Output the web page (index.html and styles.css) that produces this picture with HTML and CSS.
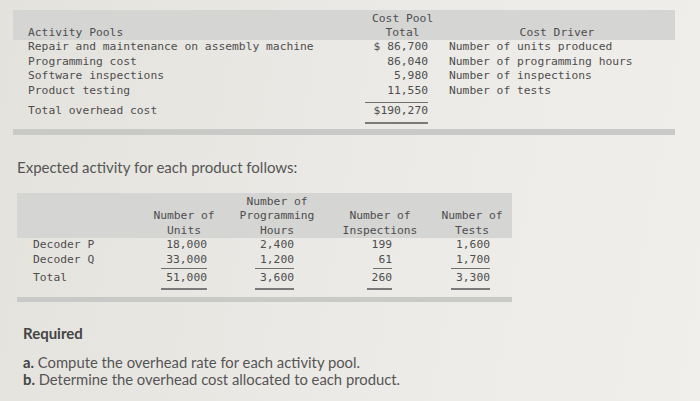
FILE: index.html
```html
<!DOCTYPE html>
<html lang="en">
<head>
    <meta charset="UTF-8">
    <title>Activity pools</title>
    <link rel="stylesheet" href="styles.css">
</head>
<body>
    <div class="hoja">

        <!-- tabla de pools de actividad -->
        <div class="pools">
            <div class="fila cabecera">
                <div>Activity Pools</div>
                <div class="centro costo">Cost Pool<br>Total</div>
                <div></div>
                <div class="centro">Cost Driver</div>
            </div>
            <div class="fila">
                <div>Repair and maintenance on assembly machine</div>
                <div class="num">$ 86,700</div>
                <div></div>
                <div>Number of units produced</div>
            </div>
            <div class="fila">
                <div>Programming cost</div>
                <div class="num">86,040</div>
                <div></div>
                <div>Number of programming hours</div>
            </div>
            <div class="fila">
                <div>Software inspections</div>
                <div class="num">5,980</div>
                <div></div>
                <div>Number of inspections</div>
            </div>
            <div class="fila">
                <div>Product testing</div>
                <div class="num linea">11,550</div>
                <div></div>
                <div>Number of tests</div>
            </div>
            <div class="fila total">
                <div>Total overhead cost</div>
                <div class="num doble">$190,270</div>
                <div></div>
                <div></div>
            </div>
        </div>

        <p class="texto">Expected activity for each product follows:</p>

        <!-- tabla de actividad por producto -->
        <div class="actividad">
            <div class="fila cabecera">
                <div></div>
                <div>Number of<br>Units</div>
                <div>Number of<br>Programming<br>Hours</div>
                <div>Number of<br>Inspections</div>
                <div>Number of<br>Tests</div>
            </div>
            <div class="fila">
                <div>Decoder P</div>
                <div class="c1"><span>18,000</span></div>
                <div class="c2"><span>2,400</span></div>
                <div class="c3"><span>199</span></div>
                <div class="c4"><span>1,600</span></div>
            </div>
            <div class="fila sub">
                <div>Decoder Q</div>
                <div class="c1"><span>33,000</span></div>
                <div class="c2"><span>1,200</span></div>
                <div class="c3"><span>61</span></div>
                <div class="c4"><span>1,700</span></div>
            </div>
            <div class="fila total">
                <div>Total</div>
                <div class="c1"><span>51,000</span></div>
                <div class="c2"><span>3,600</span></div>
                <div class="c3"><span>260</span></div>
                <div class="c4"><span>3,300</span></div>
            </div>
        </div>

        <p class="requerido">Required</p>
        <p class="paso"><b>a.</b> Compute the overhead rate for each activity pool.</p>
        <p class="paso"><b>b.</b> Determine the overhead cost allocated to each product.</p>
    </div>
</body>
</html>
```
FILE: styles.css
```css
body {
    margin: 0;
    background: linear-gradient(100deg, #e4e2dd 0%, #ebe9e5 45%, #f0efeb 100%);
    color: #505050;
    width: 700px;
    height: 401px;
    overflow: hidden;
}

.hoja {
    padding-top: 10px;
}

/* tablas en fuente monoespaciada */
.pools, .actividad {
    font-family: "DejaVu Sans Mono", monospace;
    font-size: 11.3px;
    line-height: 14.7px;
    color: #4e4e4e;
}

.pools {
    margin-left: 13px;
    width: 662px;
    padding-bottom: 5px;
    border-bottom: 6px solid #c9c9c7;
}

.pools .fila {
    display: grid;
    grid-template-columns: 337px 63px 21px 216px;
    padding-left: 15px;
}

.pools .cabecera {
    background: #d5d5d4;
    line-height: 14px;
    padding-top: 2px;
    align-items: end;
}

.pools .centro {
    text-align: center;
    white-space: nowrap;
}

.pools .costo {
    margin: 0 -5px 0 7px;
}

.pools .num {
    text-align: right;
}

.pools .linea {
    padding-bottom: 3px;
    border-bottom: 1px solid #707070;
}

.pools .total {
    margin-top: 1px;
}

.pools .doble {
    padding-bottom: 3px;
    border-bottom: 2px solid #7a7a7a;
}

.texto {
    margin: 23px 0 0 17px;
    font-family: Lato, sans-serif;
    font-size: 15px;
    line-height: 19px;
    color: #555;
}

.actividad {
    margin: 16px 0 0 17px;
    width: 495px;
    line-height: 14.5px;
    padding-bottom: 7px;
    border-bottom: 5px solid #c9c9c7;
}

.actividad .fila {
    display: grid;
    grid-template-columns: 107px 88px 98px 108px 76px;
    padding-left: 16px;
}

.actividad .cabecera {
    background: #d5d5d4;
    padding-top: 2px;
    align-items: end;
    text-align: center;
}

.actividad .c1, .actividad .c2, .actividad .c3, .actividad .c4 {
    text-align: right;
}

.actividad .c1 { padding-right: 21px; }
.actividad .c2 { padding-right: 32px; }
.actividad .c3 { padding-right: 42px; }
.actividad .c4 { padding-right: 20px; }

.actividad span {
    display: inline-block;
    padding-left: 5px;
}

.actividad .sub span {
    padding-bottom: 1px;
    border-bottom: 1px solid #707070;
}

.actividad .total {
    margin-top: 2px;
}

.actividad .total span {
    padding-bottom: 2px;
    border-bottom: 2px solid #7a7a7a;
}

.requerido {
    margin: 22px 0 0 23px;
    font-family: Lato, sans-serif;
    font-weight: bold;
    font-size: 15px;
    line-height: 19px;
    color: #444;
}

.requerido + .paso {
    margin-top: 11px;
}

.paso {
    margin: 0 0 0 23px;
    font-family: Lato, sans-serif;
    font-size: 14.8px;
    line-height: 17px;
    color: #555;
}

.paso b {
    color: #444;
}
```
